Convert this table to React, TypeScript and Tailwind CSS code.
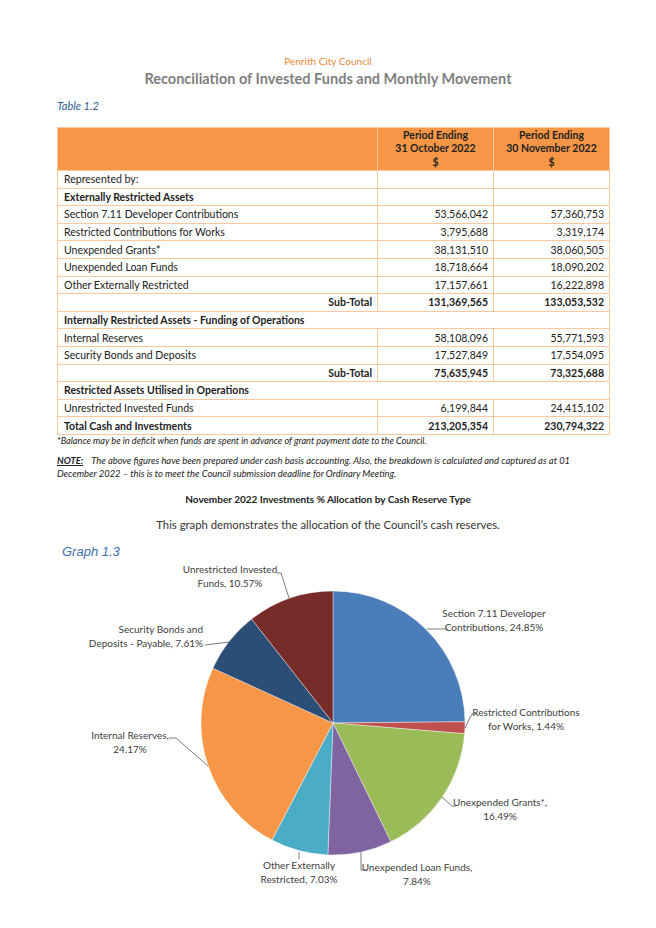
import React from "react";

const FONT = { fontFamily: "Lato, 'Open Sans', 'Liberation Sans', sans-serif" };

type Row =
  | { kind: "plain"; label: string; a?: string; b?: string; bold?: boolean }
  | { kind: "span"; label: string }
  | { kind: "sub"; a: string; b: string };

const rows: Row[] = [
  { kind: "plain", label: "Represented by:" },
  { kind: "plain", label: "Externally Restricted Assets", bold: true },
  { kind: "plain", label: "Section 7.11 Developer Contributions", a: "53,566,042", b: "57,360,753" },
  { kind: "plain", label: "Restricted Contributions for Works", a: "3,795,688", b: "3,319,174" },
  { kind: "plain", label: "Unexpended Grants*", a: "38,131,510", b: "38,060,505" },
  { kind: "plain", label: "Unexpended Loan Funds", a: "18,718,664", b: "18,090,202" },
  { kind: "plain", label: "Other Externally Restricted", a: "17,157,661", b: "16,222,898" },
  { kind: "sub", a: "131,369,565", b: "133,053,532" },
  { kind: "span", label: "Internally Restricted Assets - Funding of Operations" },
  { kind: "plain", label: "Internal Reserves", a: "58,108,096", b: "55,771,593" },
  { kind: "plain", label: "Security Bonds and Deposits", a: "17,527,849", b: "17,554,095" },
  { kind: "sub", a: "75,635,945", b: "73,325,688" },
  { kind: "span", label: "Restricted Assets Utilised in Operations" },
  { kind: "plain", label: "Unrestricted Invested Funds", a: "6,199,844", b: "24,415,102" },
  { kind: "plain", label: "Total Cash and Investments", a: "213,205,354", b: "230,794,322", bold: true },
];

const slices = [
  { v: 24.85, c: "#4a7ebb" },
  { v: 1.44, c: "#c0504d" },
  { v: 16.49, c: "#9bbb59" },
  { v: 7.84, c: "#8064a2" },
  { v: 7.03, c: "#4bacc6" },
  { v: 24.17, c: "#f79646" },
  { v: 7.61, c: "#2c4d75" },
  { v: 10.57, c: "#772c2a" },
];

const CX = 333;
const CY = 182;
const R = 132;

function pt(pct: number) {
  const a = (pct / 100) * Math.PI * 2;
  return [CX + R * Math.sin(a), CY - R * Math.cos(a)];
}

function Pie() {
  let acc = 0;
  const paths = slices.map((s, i) => {
    const [x1, y1] = pt(acc);
    const [x2, y2] = pt(acc + s.v);
    const large = s.v > 50 ? 1 : 0;
    acc += s.v;
    return (
      <path
        key={i}
        d={`M${CX},${CY} L${x1.toFixed(2)},${y1.toFixed(2)} A${R},${R} 0 ${large} 1 ${x2.toFixed(2)},${y2.toFixed(2)} Z`}
        fill={s.c}
        stroke="#ffffff"
        strokeWidth={0.4}
      />
    );
  });
  return (
    <svg className="absolute left-0 top-0" width={656} height={360} viewBox="0 0 656 360">
      {paths}
      <g fill="none" stroke="#595959" strokeWidth={0.8}>
        <polyline points="277,32 281,32 289,57" />
        <polyline points="205,104 229,101" />
        <polyline points="448,88 427,88" />
        <polyline points="465,187 472,173 477,173" />
        <polyline points="442,256 452,265 456,265" />
        <polyline points="361,311 361,329 367,329" />
        <polyline points="299,311 299,318" />
        <polyline points="208,225 176,197 169,197" />
      </g>
    </svg>
  );
}

function Label({ left, top, align, lines }: { left: number; top: number; align: "center" | "right" | "left"; lines: string[] }) {
  const cls = align === "center" ? "text-center" : align === "right" ? "text-right" : "text-left";
  return (
    <div
      className={`absolute w-[130px] text-[10px] leading-[14px] text-[#404040] ${cls}`}
      style={{ left, top }}
    >
      {lines.map((l, i) => (
        <div key={i} className="whitespace-nowrap">{l}</div>
      ))}
    </div>
  );
}

export default function App() {
  const cellB = "border border-[#fac8a0]";
  return (
    <div className="w-[656px] h-[928px] bg-white relative overflow-hidden text-[#222222]" style={FONT}>
      <div className="pt-[55px] text-center">
        <div className="text-[10px] leading-[13px] text-[#e8883a]">Penrith City Council</div>
        <div className="text-[14.5px] leading-[18px] font-bold text-[#7f7f7f] mt-[2px]">
          Reconciliation of Invested Funds and Monthly Movement
        </div>
      </div>
      <div className="ml-[57px] mt-[11px] text-[11px] leading-[14px] italic text-[#2e5c8a]">Table 1.2</div>

      <table className="ml-[57px] mt-[14px] w-[552px] border-collapse text-[10.5px]" style={{ tableLayout: "fixed" }}>
        <colgroup>
          <col style={{ width: 320 }} />
          <col style={{ width: 116 }} />
          <col style={{ width: 116 }} />
        </colgroup>
        <thead>
          <tr className="bg-[#f79646] h-[43px]">
            <th className={cellB}></th>
            <th className={`${cellB} font-bold text-center leading-[13.5px] text-[#222222]`}>
              Period Ending
              <br />
              31 October 2022
              <br />$
            </th>
            <th className={`${cellB} font-bold text-center leading-[13.5px] text-[#222222]`}>
              Period Ending
              <br />
              30 November 2022
              <br />$
            </th>
          </tr>
        </thead>
        <tbody>
          {rows.map((r, i) => {
            if (r.kind === "span") {
              return (
                <tr key={i} className="h-[17.6px]">
                  <td colSpan={3} className={`${cellB} px-[6px] font-bold leading-[16px]`}>{r.label}</td>
                </tr>
              );
            }
            if (r.kind === "sub") {
              return (
                <tr key={i} className="h-[17.6px] font-bold">
                  <td className={`${cellB} px-[5px] text-right leading-[16px]`}>Sub-Total</td>
                  <td className={`${cellB} px-[5px] text-right leading-[16px]`}>{r.a}</td>
                  <td className={`${cellB} px-[5px] text-right leading-[16px]`}>{r.b}</td>
                </tr>
              );
            }
            return (
              <tr key={i} className={`h-[17.6px] ${r.bold ? "font-bold" : ""}`}>
                <td className={`${cellB} px-[6px] leading-[16px]`}>{r.label}</td>
                <td className={`${cellB} px-[5px] text-right leading-[16px]`}>{r.a ?? ""}</td>
                <td className={`${cellB} px-[5px] text-right leading-[16px]`}>{r.b ?? ""}</td>
              </tr>
            );
          })}
        </tbody>
      </table>

      <div className="ml-[57px] mt-[0px] text-[9.2px] leading-[12px] italic">
        *Balance may be in deficit when funds are spent in advance of grant payment date to the Council.
      </div>
      <div className="ml-[57px] w-[515px] mt-[7px] text-[9.4px] leading-[13px] italic">
        <span className="font-bold underline mr-[8px]">NOTE:</span>
        <span>
          The above figures have been prepared under cash basis accounting. Also, the breakdown is calculated and captured as at 01 December 2022 – this is to meet the Council submission deadline for Ordinary Meeting.
        </span>
      </div>
      <div className="mt-[13px] text-center text-[10px] leading-[13px] font-bold">
        November 2022 Investments % Allocation by Cash Reserve Type
      </div>
      <div className="mt-[11px] text-center text-[11.3px] leading-[15px] text-[#333333]">
        This graph demonstrates the allocation of the Council’s cash reserves.
      </div>

      <div className="relative mt-[9px] w-[656px] h-[360px]">
        <div
          className="absolute left-[62px] top-[1px] text-[13px] italic text-[#3d6ea8]"
          style={{ fontFamily: "'Liberation Sans', Arial, sans-serif" }}
        >
          Graph 1.3
        </div>
        <Pie />
        <Label left={165} top={21} align="center" lines={["Unrestricted Invested", "Funds, 10.57%"]} />
        <Label left={73} top={81} align="right" lines={["Security Bonds and", "Deposits - Payable, 7.61%"]} />
        <Label left={429} top={65} align="center" lines={["Section 7.11 Developer", "Contributions, 24.85%"]} />
        <Label left={461} top={164} align="center" lines={["Restricted Contributions", "for Works, 1.44%"]} />
        <Label left={435} top={254} align="center" lines={["Unexpended Grants*,", "16.49%"]} />
        <Label left={352} top={319} align="center" lines={["Unexpended Loan Funds,", "7.84%"]} />
        <Label left={234} top={317} align="center" lines={["Other Externally", "Restricted, 7.03%"]} />
        <Label left={65} top={187} align="center" lines={["Internal Reserves,", "24.17%"]} />
      </div>
    </div>
  );
}
